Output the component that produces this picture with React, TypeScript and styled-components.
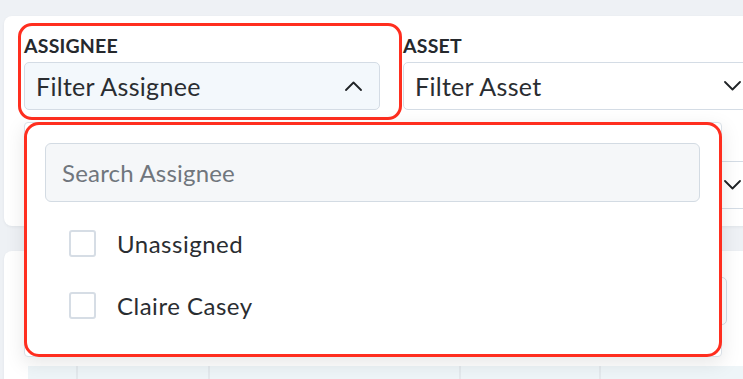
import React from "react";
import styled, { createGlobalStyle } from "styled-components";

const Global = createGlobalStyle`
  html, body { margin: 0; padding: 0; background: #eef1f5; overflow: hidden; }
  body { font-family: Lato, "Noto Sans", sans-serif; color: #272a2e; }
  * { box-sizing: border-box; }
`;

const Page = styled.div`
  width: 1100px;
  padding: 16px 0 0 4px;
  display: flex;
  flex-direction: column;
  gap: 25px;
`;

const FilterCard = styled.section`
  position: relative;
  z-index: 2;
  height: 210px;
  background: #fff;
  border-radius: 8px;
  box-shadow: 0 1px 3px rgba(20, 30, 50, 0.06);
  padding: 18px 20px 0 20px;
  display: grid;
  grid-template-columns: repeat(2, 356px);
  column-gap: 23px;
  row-gap: 23px;
  align-content: start;
`;

const Field = styled.div`
  position: relative;
  display: flex;
  flex-direction: column;
  gap: 4px;
`;

const Label = styled.div`
  align-self: flex-start;
  font-size: 19.5px;
  line-height: 24px;
  font-weight: 700;
  letter-spacing: 0.2px;
  color: #26292d;
  text-transform: uppercase;
`;

const Select = styled.div<{ $open?: boolean }>`
  height: 48px;
  display: flex;
  align-items: center;
  justify-content: space-between;
  padding: 0 17px 0 11px;
  border: 1.5px solid #d4dce5;
  border-radius: 5px;
  background: ${(p) => (p.$open ? "#f3f8fc" : "#fff")};
  font-size: 25px;
  letter-spacing: 0.3px;
  color: #2a2d31;
`;

const Highlight = styled.div`
  position: absolute;
  left: -6.5px;
  right: -22px;
  top: -11px;
  bottom: -10px;
  border: 3.5px solid #ff2e1f;
  border-radius: 14px;
  pointer-events: none;
`;

const Panel = styled.div`
  position: absolute;
  left: 0;
  top: calc(100% + 12px);
  width: 698px;
  z-index: 5;
  background: #fff;
  border: 1px solid #d8dfe6;
  border-radius: 4px;
  box-shadow: 0 6px 20px rgba(0, 0, 0, 0.1);
  padding: 20px 21px 20px 20px;
  display: flex;
  flex-direction: column;
  gap: 10px;
  &::after {
    content: "";
    position: absolute;
    inset: -1px;
    border: 3.5px solid #ff2e1f;
    border-radius: 15px;
    pointer-events: none;
  }
`;

const Search = styled.input`
  width: 100%;
  height: 59px;
  border: 1.5px solid #d3dbe3;
  border-radius: 6px;
  background: #f5f7f9;
  padding: 0 16px;
  font-family: Lato, "Noto Sans", sans-serif;
  font-size: 24px;
  letter-spacing: 0.2px;
  color: #2a2d31;
  outline: none;
  &::placeholder { color: #70767d; }
`;

const OptionList = styled.div`
  display: flex;
  flex-direction: column;
`;

const Option = styled.label`
  height: 62px;
  display: flex;
  align-items: center;
  gap: 21px;
  padding-left: 24px;
  font-size: 24px;
  letter-spacing: 0.5px;
  color: #2a2d31;
`;

const Box = styled.span`
  width: 27px;
  height: 27px;
  border: 2px solid #d6dde5;
  border-radius: 3px;
  background: #fff;
  flex: none;
`;

const ListCard = styled.section`
  position: relative;
  z-index: 1;
  height: 200px;
  background: #fff;
  border-radius: 8px;
  box-shadow: 0 1px 3px rgba(20, 30, 50, 0.06);
  padding: 26px 24px 0 24px;
  display: flex;
  flex-direction: column;
  gap: 41px;
`;

const Toolbar = styled.div`
  display: flex;
`;

const ToolInput = styled.div`
  width: 699px;
  height: 48px;
  border: 1.5px solid #d4dce5;
  border-radius: 5px;
`;

const TableHead = styled.div`
  display: grid;
  grid-template-columns: 50px 132px 251px 140px 300px;
  height: 40px;
  background: #eef5f8;
`;

const HeadCell = styled.div`
  border-right: 2px solid #e3e9ed;
`;

const Chevron = ({ up }: { up?: boolean }) => (
  <svg width="17" height="10" viewBox="0 0 17 10" fill="none">
    <polyline
      points={up ? "1,9 8.5,1.5 16,9" : "1,1 8.5,8.5 16,1"}
      stroke="#202326"
      strokeWidth="1.8"
      strokeLinecap="round"
      strokeLinejoin="round"
    />
  </svg>
);

export default function App() {
  return (
    <>
      <Global />
      <Page>
        <FilterCard>
          <Field>
            <Label>Assignee</Label>
            <Select $open>
              <span>Filter Assignee</span>
              <Chevron up />
            </Select>
            <Highlight />
            <Panel>
              <Search placeholder="Search Assignee" />
              <OptionList>
                <Option>
                  <Box />
                  Unassigned
                </Option>
                <Option>
                  <Box />
                  Claire Casey
                </Option>
              </OptionList>
            </Panel>
          </Field>
          <Field>
            <Label>Asset</Label>
            <Select>
              <span>Filter Asset</span>
              <Chevron />
            </Select>
          </Field>
          <Field>
            <Label>Priority</Label>
            <Select>
              <span>Filter Priority</span>
              <Chevron />
            </Select>
          </Field>
          <Field>
            <Label>Status</Label>
            <Select>
              <span>Filter Status</span>
              <Chevron />
            </Select>
          </Field>
        </FilterCard>
        <ListCard>
          <Toolbar>
            <ToolInput />
          </Toolbar>
          <TableHead>
            <HeadCell />
            <HeadCell />
            <HeadCell />
            <HeadCell />
            <HeadCell />
          </TableHead>
        </ListCard>
      </Page>
    </>
  );
}
